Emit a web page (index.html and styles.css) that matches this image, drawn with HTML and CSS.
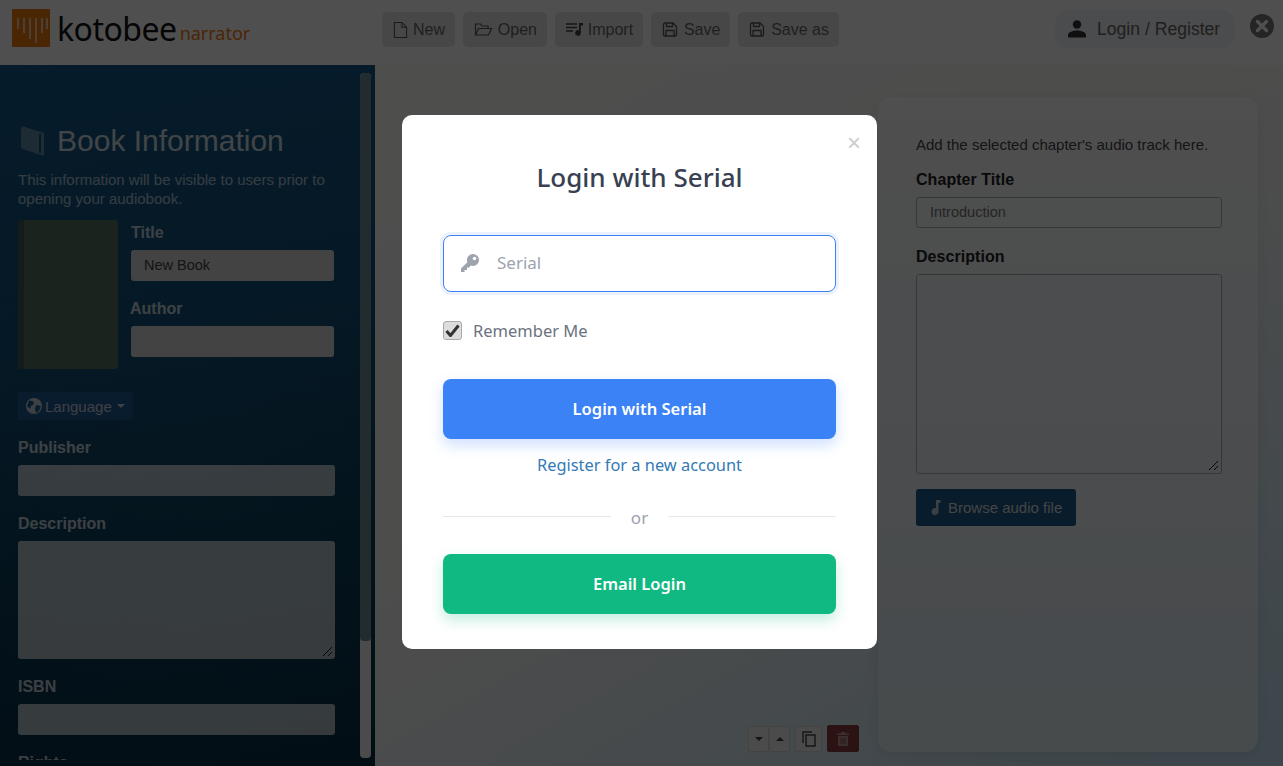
FILE: index.html
```html
<!DOCTYPE html>
<html lang="en">
<head>
<meta charset="utf-8">
<title>Kotobee Narrator</title>
<link rel="stylesheet" href="styles.css">
</head>
<body>
<div class="app">
  <header class="topbar">
    <div class="logo">
      <svg class="logo-mark" viewBox="0 0 38 38" width="38" height="38"><rect width="38" height="38" fill="#f07a10"/><g stroke="#fff" stroke-opacity=".6" stroke-width="2" fill="none"><path d="M6 9v11M12 9v15M18 9v21M24 9v25M30 9v15M35 9v11" /></g></svg>
      <span class="logo-main">kotobee</span><span class="logo-sub">narrator</span>
    </div>
    <nav class="toolbar">
      <button class="tool"><svg width="15" height="18" viewBox="0 0 16 18"><path d="M1.500 1h8l5 5v11h-13zM9.500 1v5h5" fill="none" stroke="#555" stroke-width="1.100"/></svg>New</button>
      <button class="tool"><svg width="19" height="15" viewBox="0 0 18 15"><path d="M1 13V2h5l1.500 2h6v2.500M1 13l3-6.500h13L14 13z" fill="none" stroke="#555" stroke-width="1.200"/></svg>Open</button>
      <button class="tool"><svg width="17" height="15" viewBox="0 0 17 15"><path d="M0 2h11M0 5.500h11M0 9h7" stroke="#444" stroke-width="1.600"/><path d="M13 1h4v2.500h-2.200V11a2.800 2.800 0 1 1-1.800-2.600z" fill="#444"/></svg>Import</button>
      <button class="tool"><svg width="16" height="15" viewBox="0 0 15 15"><path d="M1 2.500A1.500 1.500 0 0 1 2.500 1h8L14 4.500v8a1.500 1.500 0 0 1-1.500 1.500h-10A1.500 1.500 0 0 1 1 12.500zM4 1v3.500h6V1M3.500 14V8.500h8V14" fill="none" stroke="#555" stroke-width="1.300"/></svg><span class="shift">Save</span></button>
      <button class="tool"><svg width="16" height="15" viewBox="0 0 15 15"><path d="M1 2.500A1.500 1.500 0 0 1 2.500 1h8L14 4.500v8a1.500 1.500 0 0 1-1.500 1.500h-10A1.500 1.500 0 0 1 1 12.500zM4 1v3.500h6V1M3.500 14V8.500h8V14" fill="none" stroke="#555" stroke-width="1.300"/></svg><span class="shift">Save as</span></button>
    </nav>
    <div class="account">
      <button class="login"><svg width="18" height="18" viewBox="0 0 18 18"><circle cx="9" cy="4.500" r="4.200" fill="#333"/><path d="M0 17.500v-2.500c0-3 5-4.500 9-4.500s9 1.500 9 4.500v2.500z" fill="#333"/></svg>Login / Register</button>
      <svg class="quit" width="24" height="24" viewBox="0 0 24 24"><circle cx="12" cy="12" r="12" fill="#777"/><path d="M7.500 7.500l9 9M16.500 7.500l-9 9" stroke="#fff" stroke-width="3.400" stroke-linecap="round"/></svg>
    </div>
  </header>
  <div class="workspace">
    <aside class="sidebar">
      <div class="side-scroll">
        <h1 class="side-title"><svg width="26" height="30" viewBox="0 0 26 30"><path d="M1 3c0-2 2-3 4-2l19 6v21c0 2-1 2-3 1L3 23c-1-.5-2-1-2-3z" fill="#fff" fill-opacity=".4"/><path d="M20 8v19" stroke="#0a3a5c" stroke-width="1.500"/></svg>Book Information</h1>
        <p class="side-intro">This information will be visible to users prior to opening your audiobook.</p>
        <div class="book-row">
          <div class="cover"></div>
          <div class="book-fields">
            <label class="field-label first">Title</label>
            <div class="input solid">New Book</div>
            <label class="field-label author">Author</label>
            <div class="input solid"></div>
          </div>
        </div>
        <button class="lang"><svg width="16" height="16" viewBox="0 0 16 16"><circle cx="8" cy="8" r="8" fill="#c8d0d8"/><path d="M3 2.500l4 .5 1 3-3 2-1 3-3-3zM10 7l5 1-2 5-3 2-1-4z" fill="#1f5c94"/></svg>Language<span class="caret"></span></button>
        <label class="field-label">Publisher</label>
        <div class="input glass"></div>
        <label class="field-label">Description</label>
        <div class="input glass area"><svg class="grip" width="11" height="11" viewBox="0 0 11 11"><path d="M1 10l9-9M6 10l4-4" stroke="#111" stroke-width="1"/></svg></div>
        <label class="field-label">ISBN</label>
        <div class="input glass"></div>
        <label class="field-label">Rights</label>
      </div>
      <div class="scrollbar"><div class="thumb"></div></div>
    </aside>
    <main class="stage">
      <div class="chapters">
        <div class="chapter-actions">
          <div class="updown">
            <button class="mini half"><span class="tri down"></span></button>
            <button class="mini half"><span class="tri up"></span></button>
          </div>
          <button class="mini copy"><svg width="14" height="16" viewBox="0 0 14 16"><path d="M1 12V1h9M4 4h9v11H4z" fill="none" stroke="#444" stroke-width="1.400"/></svg></button>
          <button class="mini danger"><svg width="12" height="14" viewBox="0 0 12 14"><path d="M4 0h4v1.500h4V3H0V1.500h4zM1 4h10v10H1z" fill="#fff" fill-opacity=".45"/><path d="M4 6v6M6 6v6M8 6v6" stroke="#8a3d3d" stroke-width=".8"/></svg></button>
        </div>
      </div>
      <section class="card">
        <p class="card-intro">Add the selected chapter's audio track here.</p>
        <label class="card-label">Chapter Title</label>
        <div class="card-input">Introduction</div>
        <label class="card-label second">Description</label>
        <div class="card-input card-area"><svg class="grip" width="11" height="11" viewBox="0 0 11 11"><path d="M1 10l9-9M6 10l4-4" stroke="#111" stroke-width="1"/></svg></div>
        <button class="browse"><svg width="11" height="15" viewBox="0 0 11 15"><path d="M5 0h4.500v3H7.500v8.500a3.500 3.500 0 1 1-2.500-3.300z" fill="#fff" fill-opacity=".7"/></svg>Browse audio file</button>
      </section>
    </main>
  </div>
</div>
<div class="overlay">
  <div class="modal">
    <span class="modal-close">×</span>
    <h2 class="modal-title">Login with Serial</h2>
    <div class="serial">
      <svg width="20" height="20" viewBox="0 0 20 20"><path d="M13 1a6 6 0 0 1 0 12c-.8 0-1.500-.1-2.200-.4L9 14.500H7V17H4.500v2H1v-3.500l6.400-6.300A6 6 0 0 1 13 1z" fill="#9ca3af"/><circle cx="14.500" cy="5.500" r="1.800" fill="#fff"/></svg>
      <span class="placeholder">Serial</span>
    </div>
    <div class="remember">
      <span class="check"><svg width="15" height="13" viewBox="0 0 15 13"><path d="M1.500 7l4 4.500 8-10" fill="none" stroke="#333" stroke-width="3"/></svg></span>
      <span>Remember Me</span>
    </div>
    <button class="cta blue">Login with Serial</button>
    <a class="register" href="#">Register for a new account</a>
    <div class="divider"><span class="rule"></span><span class="or">or</span><span class="rule"></span></div>
    <button class="cta green">Email Login</button>
  </div>
</div>
</body>
</html>
```
FILE: styles.css
```css
* { box-sizing: border-box; }
html, body { margin: 0; height: 100%; overflow: hidden; }
body { font-family: "Liberation Sans", Arial, sans-serif; position: relative; background: #fff; }
button { font-family: inherit; border: 0; padding: 0; }
.app { height: 766px; display: flex; flex-direction: column; }

.topbar { height: 65px; flex: none; display: flex; align-items: flex-start; background: #fff; }
.logo { width: 382px; flex: none; display: flex; align-items: flex-start; padding: 9px 0 0 12px; }
.logo-mark { flex: none; }
.logo-main { font-family: "Noto Sans", sans-serif; font-size: 32px; line-height: 40px; color: #111; margin-left: 7px; letter-spacing: -.5px; }
.logo-sub { font-family: "Noto Sans", sans-serif; font-size: 18px; line-height: 24px; color: #f07a10; margin: 12px 0 0 3px; }
.toolbar { display: flex; gap: 7.800px; padding-top: 12px; }
.tool { height: 35px; display: flex; align-items: center; gap: 5px; padding: 0 10px 0 11px; background: #e6e6e6; color: #666; font-size: 16px; border-radius: 5px; }
.shift { margin-left: 1px; }
.account { margin-left: auto; display: flex; align-items: flex-start; padding: 10px 9px 0 0; }
.login { height: 38px; width: 180px; display: flex; align-items: center; gap: 11px; padding-left: 13px; font-size: 17.600px; color: #666; background: #f2f4f8; border-radius: 14px; }
.quit { margin: 4px 0 0 15px; }

.workspace { flex: 1; min-height: 0; display: flex; }
.sidebar { width: 375px; flex: none; display: flex; position: relative; overflow: hidden;
  background:
    radial-gradient(ellipse 420px 260px at 60% 62%, rgba(50,120,130,.14), rgba(50,120,130,0) 100%),
    linear-gradient(170deg, #155a8a 0%, #114c76 40%, #083957 68%, #072e44 100%); }
.side-scroll { width: 360px; flex: none; height: 695px; overflow: hidden; padding: 56px 0 0 18px; }
.side-title { margin: 0; display: flex; align-items: center; gap: 11px; padding-left: 2px; font-size: 30px; line-height: 40px; font-weight: 400; color: #fff; opacity: .8; }
.side-intro { margin: 9px 0 0; width: 330px; font-size: 15px; line-height: 19px; color: #fff; opacity: .65; }
.book-row { display: flex; margin-top: 12px; }
.cover { width: 100px; height: 149px; flex: none; border-radius: 3px; background: linear-gradient(90deg, #46594f 0 6px, #587065 6px 100%); }
.book-fields { width: 216px; padding: 3px 0 0 13px; }
.field-label { display: block; font-size: 16px; line-height: 18px; font-weight: 700; color: #fff; opacity: .75; margin-top: 18px; position: relative; top: 1px; }
.field-label.first { margin-top: 0; }
.field-label.author { margin: 18px 0 0 -1px; }
.input { height: 31px; margin-top: 9px; border-radius: 3px; font-size: 14.500px; line-height: 31px; padding-left: 13px; position: relative; color: #444; }
.book-fields .input { width: 203px; margin-top: 9px; }
.input.solid { background: #d8d8d8; }
.input.glass { width: 317px; background: rgba(255,255,255,.68); margin-top: 9px; }
.input.area { height: 118px; }
.grip { position: absolute; right: 2px; bottom: 2px; }
.lang { display: flex; align-items: center; gap: 3px; width: 115px; height: 28px; margin: 23px 0 18px; padding-left: 8px; background: #1f5c94; color: #ccd; border-radius: 3px; font-size: 15px; }
.caret { width: 0; height: 0; margin-left: 2px; border: 4.500px solid transparent; border-top-color: #ccd; border-bottom: 0; }
.scrollbar { width: 11px; height: 685px; margin-top: 8px; flex: none; background: #f0f0f0; border-radius: 4px; overflow: hidden; }
.thumb { height: 568px; background: #6d8c96; border-radius: 4px; }

.stage { flex: 1; display: flex; min-width: 0; padding: 32px 25px 14px 0; background: linear-gradient(150deg, #fbfbf9 0%, #f6f6f4 50%, #c2e2f5 100%); }
.chapters { flex: 1; display: flex; align-items: flex-end; justify-content: flex-end; padding-right: 19px; }
.chapter-actions { display: flex; align-items: flex-end; gap: 5px; }
.updown { display: flex; width: 42px; height: 26px; }
.mini { height: 26px; background: #f2f2f2; border: 1px solid #d8d8d8; border-radius: 2px; display: flex; align-items: center; justify-content: center; }
.half { width: 21px; }
.tri { width: 0; height: 0; border: 4.500px solid transparent; }
.tri.down { border-top-color: #444; border-bottom: 0; }
.tri.up { border-bottom-color: #444; border-top: 0; }
.copy { width: 27px; }
.danger { width: 32px; height: 27px; background: #8a3d3d; border-color: #8a3d3d; }
.card { width: 380px; flex: none; background: linear-gradient(180deg, #fdfdfd 0%, #e4f0f6 100%); border-radius: 14px; padding: 39px 37px 0 38px; box-shadow: 0 4px 14px rgba(0,0,0,.08); }
.card-intro { margin: 0; font-size: 15px; line-height: 18px; color: #444; }
.card-label { display: block; margin-top: 16px; font-size: 16px; line-height: 18px; font-weight: 700; color: #222; letter-spacing: .05px; position: relative; top: 1px; }
.card-label.second { margin-top: 19px; }
.card-input { position: relative; height: 31px; margin-top: 9px; border: 1px solid #b0b0b0; border-radius: 3px; font-size: 14.500px; line-height: 29px; padding-left: 13px; color: #777; width: 306px; }
.card-area { height: 200px; }
.browse { display: flex; align-items: center; gap: 6px; width: 160px; height: 37px; margin-top: 15px; padding-left: 15px; background: #1c5a8a; border-radius: 3px; color: #ddd; font-size: 15px; }

.overlay { position: absolute; inset: 0; background: rgba(0,0,0,.69); display: flex; align-items: center; justify-content: center; padding: 0 4px 2px 0; }
.modal { position: relative; width: 475px; height: 534px; background: #fff; border-radius: 10px; padding: 41px 41px 0; font-family: "Noto Sans", sans-serif; }
.modal-close { position: absolute; top: 14px; right: 16px; font-size: 24px; line-height: 28px; color: #ccc; font-family: "Liberation Sans", sans-serif; }
.modal-title { margin: 0; text-align: center; font-size: 26px; line-height: 42px; font-weight: 500; color: #374151; }
.serial { height: 57px; margin-top: 37px; display: flex; align-items: center; gap: 17px; padding: 0 0 2px 16px; border: 1px solid #3b82f6; border-radius: 8px; box-shadow: 0 0 0 3px rgba(59,130,246,.1); }
.placeholder { font-size: 17px; color: #9ca3af; }
.remember { display: flex; align-items: center; gap: 11px; margin-top: 28px; height: 20px; font-size: 16.500px; color: #6b7280; }
.check { width: 19px; height: 19px; display: flex; align-items: center; justify-content: center; border: 1px solid #aaa; border-radius: 3px; background: #dcdcdc; }
.cta { display: block; width: 100%; height: 60px; padding-bottom: 1px; border-radius: 8px; color: #fff; font-family: "Noto Sans", sans-serif; font-size: 16.500px; font-weight: 600; }
.blue { margin-top: 39px; background: #3b82f6; box-shadow: 0 6px 14px rgba(59,130,246,.25); }
.green { background: #10b981; box-shadow: 0 6px 14px rgba(16,185,129,.25); }
.register { display: block; margin-top: 14px; text-align: center; font-size: 16.400px; line-height: 24px; color: #337ab7; text-decoration: none; }
.divider { display: flex; align-items: center; height: 24px; margin: 28px 0 25px; }
.rule { flex: 1; height: 1px; background: #e5e7eb; margin-top: -1px; }
.or { width: 57px; text-align: center; font-size: 17px; color: #9ca3af; margin-top: 1px; }
```
